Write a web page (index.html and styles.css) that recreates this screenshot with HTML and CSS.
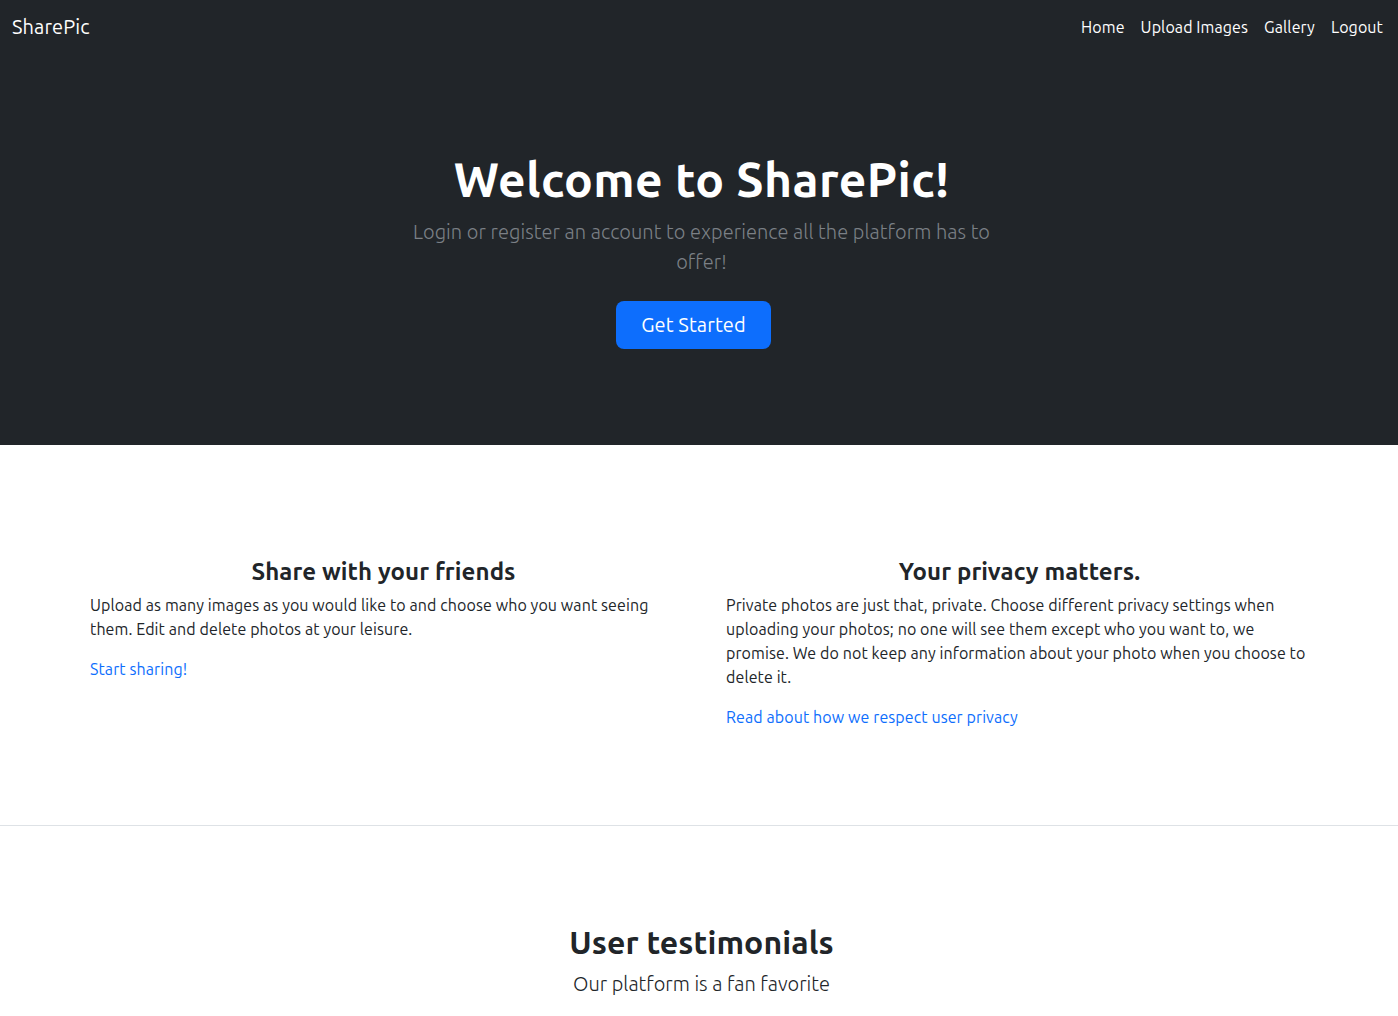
FILE: index.html
```html
<!DOCTYPE html>
<html lang="en">
<head>
<meta charset="utf-8">
<title>SharePic</title>
<link rel="stylesheet" href="styles.css">
</head>
<body>
<nav class="navbar">
  <a class="brand" href="#">SharePic</a>
  <ul class="nav-links">
    <li><a href="#">Home</a></li>
    <li><a href="#">Upload Images</a></li>
    <li><a href="#">Gallery</a></li>
    <li><a href="#">Logout</a></li>
  </ul>
</nav>
<header class="hero">
  <h1 class="hero-title">Welcome to SharePic!</h1>
  <p class="hero-lead">Login or register an account to experience all the platform has to offer!</p>
  <a class="btn-primary" href="#">Get Started</a>
</header>
<section class="features">
  <div class="feature">
    <h3 class="feature-title">Share with your friends</h3>
    <p class="feature-text">Upload as many images as you would like to and choose who you want seeing them. Edit and delete photos at your leisure.</p>
    <a class="feature-link" href="#">Start sharing!</a>
  </div>
  <div class="feature">
    <h3 class="feature-title">Your privacy matters.</h3>
    <p class="feature-text">Private photos are just that, private. Choose different privacy settings when uploading your photos; no one will see them except who you want to, we promise. We do not keep any information about your photo when you choose to delete it.</p>
    <a class="feature-link" href="#">Read about how we respect user privacy</a>
  </div>
</section>
<section class="testimonials">
  <h2 class="testimonials-title">User testimonials</h2>
  <p class="testimonials-lead">Our platform is a fan favorite</p>
</section>
</body>
</html>
```
FILE: styles.css
```css
* { box-sizing: border-box; }
html, body {
  margin: 0;
  padding: 0;
}
body {
  font-family: Ubuntu, Lato, "Open Sans", sans-serif;
  font-size: 16px;
  line-height: 1.5;
  letter-spacing: 0.006em;
  color: #212529;
  background: #fff;
}
a { text-decoration: none; }

.navbar {
  background: #212529;
  height: 56px;
  display: flex;
  align-items: center;
  justify-content: space-between;
  padding: 0 7px 2px 12px;
}
.brand {
  color: #fff;
  font-size: 20px;
  line-height: 30px;
}
.nav-links {
  list-style: none;
  margin: 0;
  padding: 0;
  display: flex;
}
.nav-links a {
  display: block;
  color: #fff;
  padding: 8px;
  line-height: 24px;
}

.hero {
  background: #212529;
  text-align: center;
  padding: 95px 0 96px 5px;
}
.hero-title {
  margin: 0 0 8px;
  color: #fff;
  font-size: 48px;
  font-weight: 700;
  line-height: 1.2;
  letter-spacing: 0.4px;
}
.hero-lead {
  margin: 0 auto 24px;
  max-width: 590px;
  color: #7b8086;
  font-size: 20px;
  font-weight: 300;
  line-height: 30px;
  letter-spacing: 0.05px;
}
.btn-primary {
  display: inline-block;
  background: #0d6efd;
  color: #fff;
  font-size: 20px;
  line-height: 30px;
  padding: 9px 25px;
  margin-right: 16px;
  border-radius: 8px;
}

.features {
  display: grid;
  grid-template-columns: 1fr 1fr;
  column-gap: 49px;
  padding: 113px 85px 96px 90px;
  border-bottom: 1px solid #dee2e6;
}
.feature-title {
  margin: 0 0 7px;
  text-align: center;
  font-size: 24px;
  font-weight: 700;
  line-height: 1.2;
}
.feature-text {
  margin: 0 0 16px;
}
.feature-link {
  color: #0d6efd;
}

.testimonials {
  text-align: center;
  padding: 97px 0 0 5px;
}
.testimonials-title {
  margin: 0 0 7px;
  font-size: 32px;
  font-weight: 700;
  line-height: 1.2;
}
.testimonials-lead {
  margin: 0;
  font-size: 20px;
  font-weight: 300;
  line-height: 30px;
  letter-spacing: 0;
}
```
